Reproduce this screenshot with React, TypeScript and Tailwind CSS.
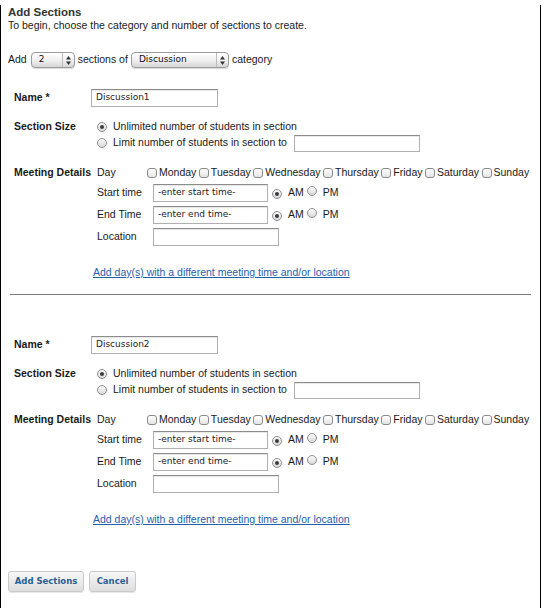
import type { ReactNode } from 'react'

const days = ['Monday', 'Tuesday', 'Wednesday', 'Thursday', 'Friday', 'Saturday', 'Sunday']

function Radio({ checked = false }: { checked?: boolean }) {
  return (
    <span className="inline-flex size-[10px] shrink-0 items-center justify-center rounded-full border border-[#8e8e8e] bg-linear-to-b from-[#fbfbfb] to-[#d9d9d9]">
      {checked && <span className="size-[4px] rounded-full bg-[#3c3c3c]" />}
    </span>
  )
}

function Checkbox() {
  return (
    <span className="inline-block size-[10px] shrink-0 rounded-[3px] border border-[#8a8a8a] bg-linear-to-b from-white to-[#e4e4e4]" />
  )
}

function TextBox({ className, value }: { className: string; value?: string }) {
  return (
    <div
      className={`flex items-center border border-[#b0b0b0] border-t-[#8c8c8c] bg-white px-[4px] font-['DejaVu_Sans',sans-serif] text-[9px] text-[#222] shadow-[inset_0_1px_1px_rgba(0,0,0,0.1)] ${className}`}
    >
      {value}
    </div>
  )
}

function Select({ className, value }: { className: string; value: string }) {
  return (
    <div
      className={`flex h-[16px] items-center rounded-[4px] border border-[#9c9c9c] bg-linear-to-b from-white via-[#f1f1f1] to-[#d6d6d6] shadow-[0_1px_1px_rgba(0,0,0,0.15)] ${className}`}
    >
      <span className="flex-1 pl-[7px] font-['DejaVu_Sans',sans-serif] text-[9px] text-[#111]">
        {value}
      </span>
      <span className="flex h-full w-[12px] items-center justify-center border-l border-[#bdbdbd]">
        <svg width="5" height="9" viewBox="0 0 5 9">
          <path d="M2.5 0 L5 3.5 H0 Z" fill="#333" />
          <path d="M2.5 9 L5 5.5 H0 Z" fill="#333" />
        </svg>
      </span>
    </div>
  )
}

function Field({ label, children, className = '' }: { label: string; children: ReactNode; className?: string }) {
  return (
    <div className={`flex items-center ${className}`}>
      <span className="w-[56px]">{label}</span>
      {children}
    </div>
  )
}

function TimeRow({ label, placeholder, className }: { label: string; placeholder: string; className: string }) {
  return (
    <Field label={label} className={`h-[18px] ${className}`}>
      <TextBox className="h-[18px] w-[115px]" value={placeholder} />
      <span className="ml-[4px]">
        <Radio checked />
      </span>
      <span className="ml-[6px]">AM</span>
      <span className="ml-[3px]">
        <Radio />
      </span>
      <span className="ml-[6px]">PM</span>
    </Field>
  )
}

function SectionForm({ name }: { name: string }) {
  return (
    <div className="pl-[13px]">
      <div className="flex h-[18px] items-center">
        <span className="w-[77px] font-bold">Name *</span>
        <TextBox className="h-[18px] w-[127px]" value={name} />
      </div>

      <div className="mt-[12px] flex">
        <span className="flex h-[16px] w-[83px] items-center font-bold">Section Size</span>
        <div className="flex flex-col">
          <div className="flex h-[16px] items-center">
            <Radio checked />
            <span className="ml-[6px]">Unlimited number of students in section</span>
          </div>
          <div className="flex h-[16px] items-center">
            <Radio />
            <span className="ml-[6px]">Limit number of students in section to</span>
            <TextBox className="ml-[7px] h-[17px] w-[126px]" />
          </div>
        </div>
      </div>

      <div className="mt-[14px] flex">
        <span className="flex h-[16px] w-[83px] items-center font-bold">Meeting Details</span>
        <div className="flex flex-col">
          <Field label="Day" className="h-[16px]">
            <div className="-ml-[6px] flex items-center gap-[2.5px]">
              {days.map((d) => (
                <span key={d} className="flex items-center gap-[2px]">
                  <Checkbox />
                  {d}
                </span>
              ))}
            </div>
          </Field>
          <TimeRow label="Start time" placeholder="-enter start time-" className="mt-[3px]" />
          <TimeRow label="End Time" placeholder="-enter end time-" className="mt-[4px]" />
          <Field label="Location" className="mt-[4px] h-[18px]">
            <TextBox className="h-[18px] w-[126px]" />
          </Field>
        </div>
      </div>

      <a className="mt-[19px] ml-[79px] block text-[10.5px] leading-[14px] text-[#1f5fae] underline">
        Add day(s) with a different meeting time and/or location
      </a>
    </div>
  )
}

export default function App() {
  return (
    <div className="h-[608px] w-[542px] bg-white">
      <div className="h-[607px] w-[541px] border-x border-b border-black font-['Liberation_Sans',Arial,sans-serif] text-[10.5px] text-[#1a1a1a]">
        <div className="px-[7px]">
          <h1 className="mt-[5px] text-[11.5px] leading-[14px] font-bold text-[#333]">Add Sections</h1>
          <p className="text-[10.5px] leading-[13px]">
            To begin, choose the category and number of sections to create.
          </p>
          <div className="mt-[20px] flex h-[16px] items-center">
            <span>Add</span>
            <Select className="ml-[4px] w-[44px]" value="2" />
            <span className="ml-[3px]">sections of</span>
            <Select className="ml-[3px] w-[98px]" value="Discussion" />
            <span className="ml-[3px]">category</span>
          </div>
        </div>

        <div className="mt-[21px]">
          <SectionForm name="Discussion1" />
        </div>

        <div className="mx-[9px] mt-[15px] h-px bg-[#7a7a7a]" />

        <div className="mt-[41px]">
          <SectionForm name="Discussion2" />
        </div>

        <div className="mt-[45px] flex gap-[5px] pl-[7px]">
          <button className="h-[21px] w-[76px] rounded-[3px] border border-[#c9c9c9] bg-linear-to-b from-[#f7f7f7] to-[#dedede] font-['DejaVu_Sans',sans-serif] text-[8.5px] font-bold text-[#2b5f93] shadow-[0_1px_1px_rgba(0,0,0,0.1)]">
            Add Sections
          </button>
          <button className="h-[21px] w-[47px] rounded-[3px] border border-[#c9c9c9] bg-linear-to-b from-[#f7f7f7] to-[#dedede] font-['DejaVu_Sans',sans-serif] text-[8.5px] font-bold text-[#2b5f93] shadow-[0_1px_1px_rgba(0,0,0,0.1)]">
            Cancel
          </button>
        </div>
      </div>
    </div>
  )
}
